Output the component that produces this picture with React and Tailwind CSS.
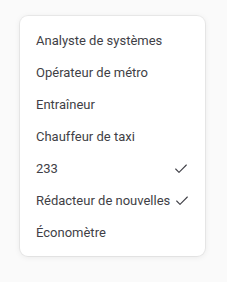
import { Check } from 'lucide-react';

const items = [
  { label: 'Analyste de systèmes' },
  { label: 'Opérateur de métro' },
  { label: 'Entraîneur' },
  { label: 'Chauffeur de taxi' },
  { label: '233', selected: true },
  { label: 'Rédacteur de nouvelles', selected: true },
  { label: 'Économètre' },
];

export default function App() {
  return (
    <div className="min-h-screen bg-[#fafafa] pt-4 pl-5" style={{ fontFamily: 'Roboto, sans-serif' }}>
      <ul className="w-[185px] rounded-lg bg-white py-2 shadow-[0_1px_6px_rgba(0,0,0,0.08)] ring-1 ring-black/5">
        {items.map((item) => (
          <li key={item.label} className="flex h-8 items-center justify-between gap-1 px-4 pt-px text-[13px] text-[#3f3f46]">
            <span className="whitespace-nowrap">{item.label}</span>
            {item.selected && <Check className="h-4 w-4 shrink-0" strokeWidth={1.6} />}
          </li>
        ))}
      </ul>
    </div>
  );
}
